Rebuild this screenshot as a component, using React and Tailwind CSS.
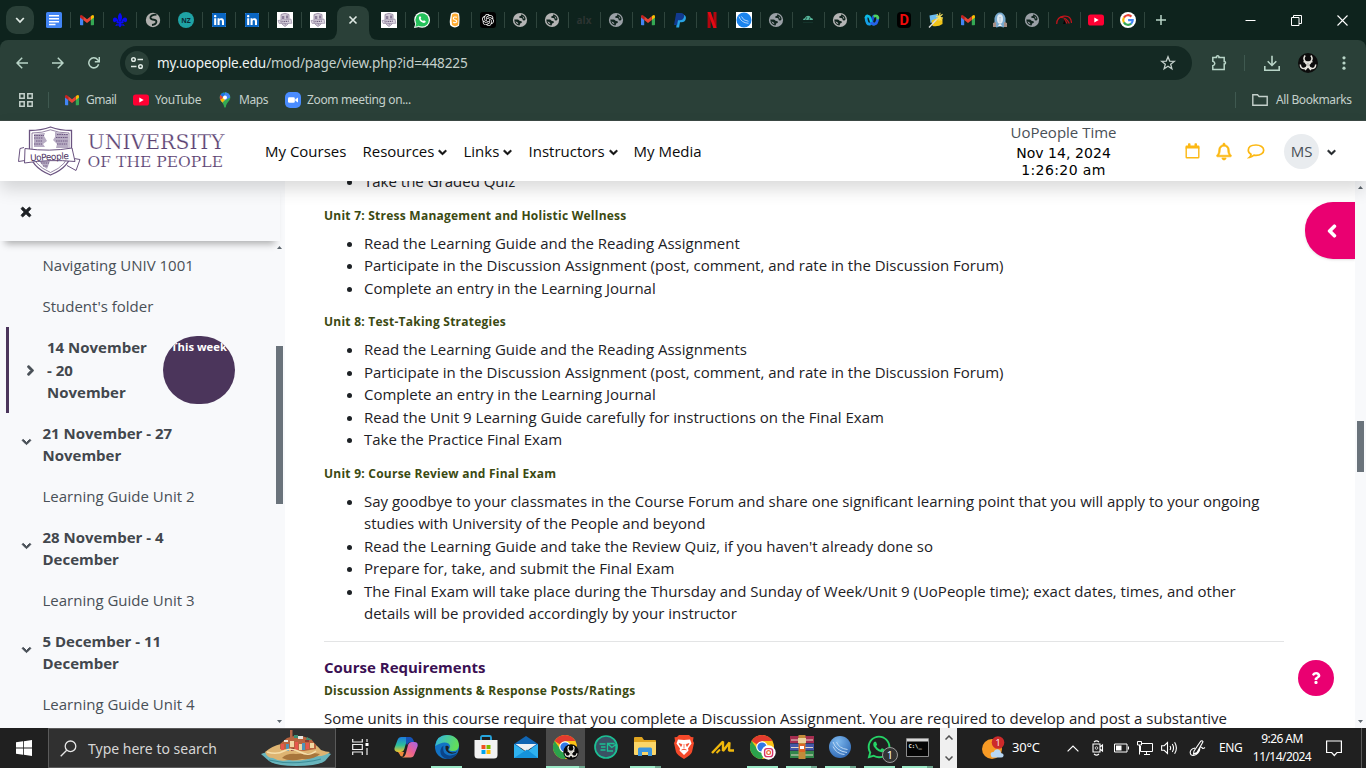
import React from "react";
import { FaWhatsapp, FaLinkedin, FaTimes, FaChevronDown, FaChevronRight, FaChevronLeft, FaRegBell, FaQuestion } from "react-icons/fa";
import { SiOpenai } from "react-icons/si";

const Svg = ({ s = 16, vb = "0 0 16 16", w, h, className = "", children }) => (
  <svg width={w || s} height={h || s} viewBox={vb} fill="none" className={"shrink-0 block " + className}>{children}</svg>
);

/* ---------- favicons ---------- */
const Docs = () => (
  <Svg><rect width="16" height="16" rx="1.5" fill="#4285f4" /><path d="M3 3.7h10M3 6.7h10M3 9.7h10M3 12.5h6.5" stroke="#fff" strokeWidth="1.5" /></Svg>
);
const Gmail = () => (
  <Svg>
    <path d="M1 4v8.5q0 .8.8.8H4.2V7z" fill="#4285f4" />
    <path d="M15 4v8.5q0 .8-.8.8h-2.4V7z" fill="#34a853" />
    <path d="M11.8 4.3 13 3.2q2-1 2 1.2v1L11.8 8z" fill="#fbbc04" />
    <path d="M4.2 8V4.3L8 7.2l3.8-2.9V8L8 10.9z" fill="#ea4335" />
    <path d="M1 5.4v-1Q1 2.2 3 3.2L4.2 4.3V8z" fill="#c5221f" />
  </Svg>
);
const Fleur = () => (
  <Svg><g fill="#0a0af5"><path d="M8 .8C10.600 3.500 10.400 5.500 9.200 9.500H6.800C5.600 5.500 5.400 3.500 8 .8z" /><path d="M6.400 9.600C5.800 4.800.6 4.300.9 8.300c.3 2.400 2.600 2.400 3.100.9.600.1.900.3 1.200 1zM9.600 9.600C10.200 4.800 15.400 4.300 15.100 8.300c-.3 2.400-2.600 2.400-3.100.9-.6.1-.9.3-1.200 1z" /><path d="M4.500 9.400h7v1.700h-7zM6.600 11h2.800l.5 2.300L8 15.600 6.100 13.300zM5.800 11.200l-.3 2.800-2.500-.5zM10.200 11.200l.3 2.800 2.500-.5z" /></g></Svg>
);
const Globe = ({ c = "#b4b4b4" }) => (
  <Svg>
    <circle cx="8" cy="8" r="7.100" fill={c} />
    <path d="M9.300 2.300Q9.600 4 8 4.200 7 4.200 7.100 5.200 7.200 6 9 6q1.500.1 1.500 1.300 0 1.200 1.400 1.200 1.300 0 1.700-1.500Q13 3.500 9.300 2.300z" fill="#10241e" />
    <path d="M2.300 7.500Q2.500 12.500 7 13.600q1-.2.900-1.300 0-1 1-1.100 1.100-.1 1-1.200-.1-.9-1.600-.9Q7.300 9.100 7 8.300 6.800 7.500 5.500 7.500z" fill="#10241e" />
    <path d="M3.400 9.200l2.300 1.200.8 1.900Q4 11.500 3.400 9.200zM10.600 3.900l1.800 2-.5 1.100-1-1.800z" fill={c} />
  </Svg>
);
const Swirl = () => (
  <Svg><circle cx="8" cy="8" r="7.200" fill="#b0b0ae" /><path d="M11.500 2.500Q5 3 5.500 6q.6 1.800 3.500 1.800 3 .3 2.200 2.700-.8 2.200-4.200 2.500" stroke="#10241e" strokeWidth="2" /></Svg>
);
const NZ = () => (
  <Svg><circle cx="8" cy="8" r="8" fill="#1fa3a5" /><text x="8" y="10.600" fontSize="6.800" fontWeight="700" fontFamily="Open Sans, sans-serif" textAnchor="middle" fill="#0c2a35">NZ</text></Svg>
);
const Linked = () => (
  <span className="flex h-4 w-4 items-center justify-center"><span className="flex h-[14px] w-[14px] items-center justify-center bg-white"><FaLinkedin className="block h-[16px] w-[16px] shrink-0 text-[#0a66c2]" /></span></span>
);
const Crest = () => (
  <Svg><rect width="16" height="16" fill="#fff" /><path d="M4 2.500l4-1.200 4 1.200v6q0 4-4 6-4-2-4-6z" fill="#d3ccd8" stroke="#93879f" strokeWidth=".8" /><path d="M5 4h2.300v3H5zM9 3.500h2v3H9zM6.500 11h3l-1 2z" fill="#8c7f9b" /><path d="M1 8.500l13-1.400.8 4.200L2.200 11.500z" fill="#ddd7e1" stroke="#9a8ea7" strokeWidth=".7" /><path d="M3.500 9.900l8.500-.8" stroke="#6d5c7f" strokeWidth="1.200" strokeDasharray="1.200 .6" /></Svg>
);
const Wa = () => (
  <Svg><circle cx="8.100" cy="7.900" r="7.900" fill="#fff" /><path d="M0 16l1.400-4.500L5 15z" fill="#fff" /><circle cx="8.100" cy="7.900" r="6.700" fill="#25c15b" /><path d="M1.300 14.700l1.100-3.600L5 14z" fill="#25c15b" /><path d="M5.300 4.500q1-.8 1.500.3l.4 1-.6 1q.9 1.600 2.500 2.300l.8-.9 1.500.7q.8.500-.2 1.500-1.500 1.200-4.200-.6Q3.900 7 5.300 4.500z" fill="#fff" /></Svg>
);
const Scribble = () => (
  <Svg><path d="M4 1.500Q8-1 12 1.500q1 6 0 12.300-4 3-8 .3-1.600-1.500-1.100-6.200z" fill="#fff" /><path d="M5 2.500q3-2 6.200 0 .7 5.500 0 10.500-3 2.300-6.200 0-1-5 0-10.500z" fill="#ffad33" /><path d="M10 5.300Q6.300 4.300 6.300 6.500q.2 1.200 2 1.500 1.500.5 1.500 1.700-.5 1.500-3.600.7" stroke="#fff" strokeWidth="1.100" /></Svg>
);
const Gpt = () => (
  <span className="flex h-4 w-4 items-center justify-center rounded-[3px] bg-black"><SiOpenai className="block h-3 w-3 text-white" /></span>
);
const Alx = () => <span className="flex h-4 w-4 items-center justify-center font-['Open_Sans',sans-serif] text-[10px] font-bold text-[#2c3432]">alx</span>;
const Netflix = () => (
  <Svg><path d="M3.600 0h3v16h-3zM9.500 0h3v16h-3z" fill="#b1060f" /><path d="M3.600 0h3.100l5.800 16H9.400z" fill="#e50914" /></Svg>
);
const Pay = () => (
  <Svg><path d="M6 2.800h5.500q3 .9 2.300 4.200-.9 3.300-4.300 3.300H8L7.100 15.500H4.200z" fill="#28a3e3" /><path d="M4.200 1h5.300q3.300.8 2.600 3.800-.8 3.600-4.600 3.500H6L5.100 13H2z" fill="#123a8f" /></Svg>
);
const Blue = () => (
  <Svg><rect width="16" height="16" fill="#fff" /><circle cx="8" cy="8" r="7.500" fill="#1a84ee" /><path d="M3 4.500Q5 10.800 12.500 11.300M5.500 4.500Q7 8.700 12.500 9.300" stroke="#d5e9ff" strokeWidth=".8" /></Svg>
);
const BlueApp = () => (
  <Svg s={24} vb="0 0 24 24">
    <defs><radialGradient id="ba" cx=".4" cy=".25" r=".9"><stop stopColor="#7db8ee" /><stop offset="1" stopColor="#255fae" /></radialGradient></defs>
    <circle cx="12" cy="12" r="11" fill="url(#ba)" />
    <path d="M5 7Q8 16 19 17.500M8.500 7Q11 13.500 19.500 14.500M5 11.500Q8.500 19 16.500 19.500" stroke="#bcd8f5" strokeWidth="1" />
  </Svg>
);
const Cloud = () => (
  <Svg><path d="M3 8q.2-1.800 1.800-1.700Q5.500 3.800 8 3.800q2.300 0 3 2.200Q13 6 13 8z" fill="#57b79b" /><path d="M5.500 8l1.500-3M9 8l1-2.600" stroke="#16352d" strokeWidth=".7" /><path d="M3 10.500h10" stroke="#15332b" /></Svg>
);
const Webex = () => (
  <Svg>
    <path d="M10.700 4Q9 4 8.300 7.700 7.500 12 5.500 12.100" stroke="#1b4fd0" strokeWidth="2.800" />
    <path d="M2 5.600Q2.500 12.200 5.500 12.200" stroke="#14a0e8" strokeWidth="2.800" strokeLinecap="round" />
    <path d="M2 5.400Q2.500 3.600 4 4 5.800 4.200 6.600 7.800 7.500 12 9.900 12.100" stroke="#0cbbe6" strokeWidth="2.600" strokeLinecap="round" />
    <path d="M7.200 10q.9 2.200 2.700 2.200 3.400-.2 3.900-6.600" stroke="#2662ea" strokeWidth="2.800" />
    <path d="M10.700 4Q13.600 3.200 13.900 6" stroke="#4fd35d" strokeWidth="2.800" strokeLinecap="round" />
  </Svg>
);
const DIcon = () => (
  <Svg><rect x="1" y="0" width="14" height="16" rx="4" fill="#000" /><text x="8.200" y="13.200" fontSize="14.500" fontWeight="700" fontFamily="Roboto, sans-serif" textAnchor="middle" fill="#f00b0b">D</text></Svg>
);
const Wand = () => (
  <Svg><path d="M1.500 3.500l8-1.500 1 6-8 3z" fill="#6bbcf0" /><path d="M3.500 8.500q5-3 11-2.500v6q-4 3-10 2z" fill="#f0c419" /><path d="M1 15.500L9.500 6.500" stroke="#ddd" strokeWidth="1.400" /><path d="M8 4.500L15 6M12 .8l-1 8M9 2l4.500 6.500M14.500 2.200L8.500 8" stroke="#f6e05e" strokeWidth="1.100" /></Svg>
);
const Ghost = () => (
  <Svg><path d="M2.500 14V6Q4 .5 8 .5T13.500 6v8l-2 1.500-3.500-1-3.500 1z" fill="#78a9ce" /><ellipse cx="8" cy="7" rx="3" ry="4.800" fill="#dde7ef" /><path d="M1 11l3-1v5H1zM12 10l3 1v4h-3z" fill="#a78f86" /><path d="M6 14q2-4 4 0z" fill="#f2efee" /><path d="M7 5.500h2M8 6v4" stroke="#b5c5d5" strokeWidth=".9" /></Svg>
);
const Gauge = () => (
  <Svg><path d="M.7 12Q.8 5 8 4.200T15.500 11M5 5.500q5.500 0 8.300 6M8 7.500q2 1 3 4" stroke="#c3141b" strokeWidth="1.200" /><path d="M7 12l1.500-4.500 1 4.500z" fill="#050505" /></Svg>
);
const YT = () => (
  <Svg><rect y="2.400" width="16" height="11.200" rx="2.600" fill="#ff0033" /><path d="M6.300 5.500v5L10.700 8z" fill="#fff" /></Svg>
);
const Google = () => (
  <Svg><circle cx="8" cy="8" r="8" fill="#fff" /><g strokeWidth="2.200"><path d="M11.400 4.600A4.800 4.800 0 0 0 3.900 5.600" stroke="#ea4335" /><path d="M3.900 5.600a4.800 4.800 0 0 0 0 4.900" stroke="#fbbc05" /><path d="M3.900 10.400a4.800 4.800 0 0 0 7.300 1.200" stroke="#34a853" /><path d="M11.100 11.700Q12.800 10.100 12.700 8.100H8.100" stroke="#4285f4" /></g></Svg>
);
const Maps = () => (
  <Svg><clipPath id="pin"><path d="M8 .2a5.400 5.400 0 0 1 5.300 5.400C13.300 9 9.500 10.500 8.800 15q-.8 1.600-1.600 0C6.500 10.500 2.700 9 2.700 5.600A5.400 5.400 0 0 1 8 .2z" /></clipPath><g clipPath="url(#pin)"><path d="M0 0h16v16H0z" fill="#34a853" /><path d="M8 0h8v4L7 9 3 11 1 8 8 2z" fill="#4285f4" /><path d="M0 9l7-5 1 4-4 4z" fill="#fbbc04" /><path d="M1 0h5.500L8 2 4.500 7 1 4z" fill="#1a73e8" /><path d="M2 2l4 3-3.500 4z" fill="#ea4335" /></g><circle cx="8" cy="5.600" r="2" fill="#fff" /></Svg>
);
const Zoom = () => (
  <Svg><rect width="16" height="16" rx="5" fill="#4a8cff" /><rect x="3" y="5.200" width="6.800" height="5.600" rx="1.300" fill="#fff" /><path d="M10.300 7.200l2.700-1.700v5l-2.700-1.700z" fill="#fff" /></Svg>
);
const BioMark = () => (
  <g stroke="#e8e6df" strokeWidth="1.500">
    <path d="M7.200 2.500Q4.800 5.500 7 8q3 2 6 0 2.200-2.500-.2-5.500" />
    <path d="M2.300 11.500Q2.500 15.500 6 15.600 9.300 15 9.200 11.600 8.500 9 5.500 8.500" />
    <path d="M17.700 11.500Q17.500 15.500 14 15.600 10.700 15 10.800 11.600 11.500 9 14.500 8.500" />
    <path d="M7 17l3-3.500 3 3.500M7.500 11q2.500-2.500 5 0" />
  </g>
);
const Bio = () => (
  <Svg s={20} vb="0 0 20 20"><circle cx="10" cy="10" r="10" fill="#0c0c0c" /><BioMark /></Svg>
);

const leftTabs = [<Docs />, <Gmail />, <Fleur />, <Swirl />, <NZ />, <Linked />, <Linked />, <Crest />, <Crest />];
const midTabs = [<Crest />, <Wa />, <Scribble />];
const rightTabs = [<Gpt />, <Globe />, <Globe />, <Alx />, <Globe c="#9aa0a6" />, <Gmail />, <Pay />, <Netflix />, <Blue />, <Globe c="#9aa0a6" />, <Cloud />, <Globe />, <Webex />, <DIcon />, <Wand />, <Gmail />, <Ghost />, <Globe c="#9aa0a6" />, <Gauge />, <YT />, <Google />];

const Sep = ({ className = "bg-[#2f453d]" }) => <span className={"h-4 w-px shrink-0 " + className} />;

function TabStrip() {
  return (
    <div className="flex h-10 shrink-0 bg-[#0e231d]">
      <div className="flex w-[46px] shrink-0 items-center pl-[6px]">
        <div className="flex h-7 w-7 items-center justify-center rounded-[10px] bg-[#2a4038]">
          <Svg s={10} vb="0 0 10 10"><path d="M1.200 3l3.800 4 3.800-4" stroke="#dfe9e4" strokeWidth="1.800" /></Svg>
        </div>
      </div>
      <div className="flex w-[281px] shrink-0 items-center overflow-hidden">
        {leftTabs.map((t, i) => (
          <div key={i} className="flex w-[33px] shrink-0 items-center gap-2">{t}{i < 8 && <Sep />}</div>
        ))}
      </div>
      <svg width="54" height="40" viewBox="0 0 54 40" className="block shrink-0"><path d="M0 40Q10 40 10 30V16Q10 6 20 6H32Q42 6 42 16V30Q42 40 52 40z" fill="#2a4038" /><path d="M22.500 16.500l7 7M29.500 16.500l-7 7" stroke="#dfe9e4" strokeWidth="1.600" /></svg>
      <div className="flex shrink-0 items-center">
        {midTabs.map((t, i) => (
          <div key={i} className="flex w-[33px] shrink-0 items-center gap-2">{t}<Sep /></div>
        ))}
        {rightTabs.map((t, i) => (
          <div key={i} className="flex w-8 shrink-0 items-center gap-2">{t}<Sep /></div>
        ))}
      </div>
      <div className="flex flex-1 items-center pl-[4px]">
        <Svg s={10} vb="0 0 10 10"><path d="M5 0v10M0 5h10" stroke="#b9d5c8" strokeWidth="1.500" /></Svg>
        <div className="ml-auto flex items-center gap-[35px] pr-[18px]">
          <Svg s={11} vb="0 0 11 11"><path d="M.5 5.500h10" stroke="#fff" /></Svg>
          <Svg s={11} vb="0 0 11 11"><path d="M.5 2.500h7.500v8H.5zM2.500 2.500V.5h8v8H8" stroke="#fff" /></Svg>
          <Svg s={11} vb="0 0 11 11"><path d="M.5.5l10 10M10.500.5l-10 10" stroke="#fff" strokeWidth="1.100" /></Svg>
        </div>
      </div>
    </div>
  );
}

function Toolbar() {
  return (
    <div className="shrink-0 bg-[#0e231d]">
      <div className="flex h-[46px] items-center rounded-t-lg bg-[#2a4038]">
        <div className="flex w-[120px] items-center gap-[24px] pl-[16px]">
          <Svg s={12} vb="0 0 12 12"><path d="M12 6H1M6.200.7L1 6l5.200 5.300" stroke="#b9d5c8" strokeWidth="1.500" /></Svg>
          <Svg s={12} vb="0 0 12 12"><path d="M0 6h11M5.800.7L11 6l-5.200 5.300" stroke="#b9d5c8" strokeWidth="1.500" /></Svg>
          <Svg s={12} vb="0 0 12 12"><path d="M10.600 7.300A5 5 0 1 1 9.700 2.700L11 4.200" stroke="#b9d5c8" strokeWidth="1.500" /><path d="M11.300 0v4.700H6.800" stroke="#b9d5c8" strokeWidth="1.500" /></Svg>
        </div>
        <div className="flex h-[34px] w-[1072px] items-center rounded-full bg-[#142923] pl-[5px]">
          <div className="flex h-6 w-6 items-center justify-center rounded-full bg-[#2a4038]">
            <Svg s={14} vb="0 0 14 14"><g stroke="#dfe9e4" strokeWidth="1.500"><circle cx="3.500" cy="3.500" r="1.800" /><path d="M7.500 3.500H13M1 10.500h5.500" /><circle cx="10.500" cy="10.500" r="1.800" /></g></Svg>
          </div>
          <div className="ml-2 whitespace-nowrap font-['Noto_Sans',sans-serif] text-[13.6px] tracking-[-0.14px] text-[#c4d0cb]"><span className="text-[#eef3f1]">my.uopeople.edu</span>/mod/page/view.php?id=448225</div>
          <Svg s={16} className="ml-auto mr-[16px]"><path d="M8 1.800l1.700 4.300 4.600.3-3.600 2.900 1.200 4.500L8 11.300l-3.900 2.500 1.200-4.500L1.700 6.400l4.600-.3z" stroke="#c4d0cb" strokeWidth="1.300" /></Svg>
        </div>
        <Svg s={18} vb="0 0 18 18" className="ml-[18px]"><path d="M2.800 3.500H6.500V2.400q1.200-1.400 2.400 0v1.100h5.300v4h.6q1.400 1.200 0 2.400h-.6v5.600H2.800v-3.800q2-.5 2-2.200T2.800 7.200z" stroke="#b9d5c8" strokeWidth="1.500" /></Svg>
        <Sep className="ml-[16px] bg-[#3f5950]" />
        <Svg s={16} className="ml-[19px]"><path d="M8 .8v9.500M3.700 6.300L8 10.500l4.300-4.200M.8 11v4.200h14.400V11" stroke="#b9d5c8" strokeWidth="1.600" /></Svg>
        <span className="ml-[18px]"><Bio /></span>
        <Svg w={4} h={14} vb="0 0 4 14" className="ml-[24px]"><g fill="#b9d5c8"><circle cx="2" cy="1.800" r="1.600" /><circle cx="2" cy="7" r="1.600" /><circle cx="2" cy="12.200" r="1.600" /></g></Svg>
      </div>
      <div className="flex h-[35px] items-center border-b border-[#3c4a45] bg-[#2a4038] pb-[6px] pl-[19px] font-['Noto_Sans',sans-serif] text-[12px] text-[#c4d0cb]">
        <Svg s={14} vb="0 0 14 14"><path d="M.8.8h4.400v4.400H.8zM8.800.8h4.400v4.400H8.800zM.8 8.800h4.400v4.400H.8zM8.800 8.800h4.400v4.400H8.800z" stroke="#c4d0cb" strokeWidth="1.500" /></Svg>
        <Sep className="ml-[15px] bg-[#3f5950]" />
        <span className="ml-[15px]"><Gmail /></span><span className="ml-[6px] w-[32px] whitespace-nowrap tracking-[-0.5px]">Gmail</span>
        <span className="ml-[15px]"><YT /></span><span className="ml-[6px] w-[47px] whitespace-nowrap tracking-[-0.35px]">YouTube</span>
        <span className="ml-[15px]"><Maps /></span><span className="ml-[6px] w-[30px] whitespace-nowrap tracking-[-0.45px]">Maps</span>
        <span className="ml-[16px]"><Zoom /></span><span className="ml-[6px] whitespace-nowrap tracking-[-0.35px]">Zoom meeting on...</span>
        <Sep className="ml-auto bg-[#3f5950]" />
        <Svg s={16} className="ml-[16px]"><path d="M.8 2.800h4.700l1.600 1.700h8.100v8.700H.8z" stroke="#c4d0cb" strokeWidth="1.400" /></Svg>
        <span className="ml-[8px] mr-[14px] w-[76px] whitespace-nowrap tracking-[-0.4px]">All Bookmarks</span>
      </div>
    </div>
  );
}

function Logo() {
  return (
    <svg width="210" height="54" viewBox="16 124 210 54" className="block shrink-0">
      <g stroke="#6a5380" fill="#fff">
        <path d="M29.500 130.500q12 0 21-3.500 9 3.500 21 3.500V151q-1 16-21 24-20-8-21-24z" strokeWidth="1.300" />
        <path d="M32 133q10.500 0 18.500-3.200Q58.500 133 69 133v18q-1 14-18.500 21.500Q33 165 32 151z" strokeWidth=".7" />
      </g>
      <path d="M34 134l11-1-1 3 3 5-4 3 2 3H34zM55 132l13 2v14H56l1-4-4-4 2-3zM39 161h11l-3 8-4-3z" fill="#b7acc3" />
      <path d="M34 135.500h10M34 138h9M36 141h6M34 144h8M57 134.500h11M56 137.500h12M56 141h12M57 144h10M41 163h8M43 166h5" stroke="#5b4272" strokeWidth=".8" strokeDasharray="1.500 .8" />
      <path d="M24 147.500l-4 1-1.500 13 6.500-1M74 158.500l6 1-4 11-9-5" fill="#fff" stroke="#6a5380" />
      <path d="M25 148.500Q50 152 72 148l3 13.500q-25-2.500-50.500 1.500z" fill="#fff" stroke="#6a5380" />
      <text x="49.500" y="160" fontFamily="DejaVu Sans, sans-serif" fontSize="9" textAnchor="middle" fill="#4d3564" textLength="39" transform="rotate(-3 49 158)">UoPeople</text>
      <text x="87.500" y="149.300" fontFamily="DejaVu Serif, serif" fontSize="20.400" fill="#5b4272" stroke="#fff" strokeWidth=".25" textLength="137" lengthAdjust="spacingAndGlyphs">UNIVERSITY</text>
      <text x="87.500" y="167.400" fontFamily="DejaVu Serif, serif" fontSize="15.700" fill="#5b4272" stroke="#fff" strokeWidth=".15" textLength="135.500" lengthAdjust="spacingAndGlyphs">OF THE PEOPLE</text>
    </svg>
  );
}

/* Heavier chevrons for the page navigation. */
const thick = "stroke-current [stroke-width:50]";

const NavItem = ({ children, menu, className = "" }) => (
  <span className={"flex shrink-0 items-center gap-[4px] whitespace-nowrap " + className}>{children}{menu && <FaChevronDown className={"mt-[2px] block h-[9px] w-[9px] overflow-visible " + thick} />}</span>
);

function SiteHeader() {
  return (
    <header className="relative z-20 flex h-[60px] shrink-0 items-center bg-white pl-[16px] font-['Open_Sans',sans-serif] text-[15px] text-[#0b0b0b] shadow-[0_8px_16px_rgba(0,0,0,0.15)]">
      <Logo />
      <nav className="ml-[39px] flex">
        <NavItem className="w-[97.5px]">My Courses</NavItem>
        <NavItem menu className="w-[101px]">Resources</NavItem>
        <NavItem menu className="w-[65px]">Links</NavItem>
        <NavItem menu className="w-[105px]">Instructors</NavItem>
        <NavItem>My Media</NavItem>
      </nav>
      <div className="ml-auto mr-[68px] flex w-[107px] flex-col items-center whitespace-nowrap leading-[17px] text-black">
        <span className="mb-[4px] text-[15px] text-[#495057]">UoPeople Time</span>
        <span className="font-['DejaVu_Sans',sans-serif] text-[14px] tracking-[0.05px]">Nov 14, 2024</span>
        <span className="font-['DejaVu_Sans',sans-serif] text-[14px] tracking-[0.4px]">1:26:20 am</span>
      </div>
      <div className="flex w-[181px] items-center text-[#fcb813]">
        <Svg w={15} h={16} vb="0 0 15 16"><path d="M1.200 4.500v9.700q0 .6.6.6h11.400q.6 0 .6-.6V4.500" stroke="#fcb813" strokeWidth="1.400" /><path d="M.5 3.500q0-1 1-1H3V1q0-.8.8-.8h.9q.8 0 .8.800v1.500h4V1q0-.8.8-.8h.9q.8 0 .8.800v1.500h1.500q1 0 1 1v2H.5z" fill="#fcb813" /></Svg>
        <FaRegBell className="ml-[16px] block h-[17px] w-[16px] overflow-visible stroke-current [stroke-width:18]" />
        <Svg w={18} h={16} vb="0 0 18 16" className="ml-[15px]"><path d="M9 2c4.500 0 7.700 2.300 7.700 5.200S13.500 12.400 9 12.400q-1 0-2-.2Q5 14 2.500 14.300 4.200 12.800 4 11.200 1.300 9.700 1.300 7.200 1.300 2 9 2z" stroke="#fcb813" strokeWidth="1.700" /></Svg>
        <span className="ml-[19px] flex h-[35px] w-[35px] items-center justify-center rounded-full bg-[#e9ecef] text-[15px] text-[#495057]">MS</span>
        <FaChevronDown className={"ml-[8px] mt-[2px] block h-[9px] w-[9px] overflow-visible text-[#1d2125] " + thick} />
      </div>
    </header>
  );
}

const SideLink = ({ children }) => <div className="flex h-[41px] shrink-0 items-center pl-[42.5px] text-[#495057]">{children}</div>;
const SideWeek = ({ a, b }) => (
  <div className="flex h-[63px] shrink-0 items-center pb-[2px] font-bold">
    <span className="flex w-[42.5px] shrink-0 justify-center pb-[3px] pl-[11px]"><FaChevronDown className={"block h-[10px] w-[11px] overflow-visible text-[#495057] " + thick} /></span>
    <span className="leading-[22px] text-[#42474d]">{a}<br />{b}</span>
  </div>
);

const Tri = ({ up }) => <Svg w={5} h={3} vb="0 0 5 3">{up ? <path d="M0 3L2.500 0 5 3z" fill="#5d666e" /> : <path d="M0 0l2.500 3L5 0z" fill="#5d666e" />}</Svg>;

function Sidebar() {
  return (
    <aside className="flex w-[285px] shrink-0 flex-col bg-[#f8f9fb] font-['Open_Sans',sans-serif] text-[15px]">
      <div className="relative z-10 mr-[5px] flex h-[60px] shrink-0 items-center bg-[#f8f9fb] pl-[20px] pt-[2px] shadow-[0_8px_7px_-5px_rgba(0,0,0,0.3)]">
        <FaTimes className="block h-[14px] w-[12px] overflow-visible stroke-current text-[#1d2125] [stroke-width:30]" />
      </div>
      <div className="flex min-h-0 flex-1">
        <div className="flex w-[275px] flex-col overflow-hidden pt-[4px]">
          <SideLink>Navigating UNIV 1001</SideLink>
          <SideLink>Student's folder</SideLink>
          <div className="ml-[6px] flex h-[86px] shrink-0 items-center border-l-[3px] border-[#4b355b] font-bold">
            <FaChevronRight className={"ml-[17px] block h-[11px] w-[9px] shrink-0 overflow-visible text-[#495057] " + thick} />
            <span className="ml-[12px] w-[116px] leading-[22.5px] text-[#42474d]">14 November<br />- 20<br />November</span>
            <span className="flex h-[68px] w-[72px] shrink-0 justify-center overflow-hidden whitespace-nowrap rounded-[34px] bg-[#4b355b] pt-[4px] text-[11.25px] leading-[14px] text-white">This week</span>
          </div>
          <SideWeek a="21 November - 27" b="November" />
          <SideLink>Learning Guide Unit 2</SideLink>
          <SideWeek a="28 November - 4" b="December" />
          <SideLink>Learning Guide Unit 3</SideLink>
          <SideWeek a="5 December - 11" b="December" />
          <SideLink>Learning Guide Unit 4</SideLink>
        </div>
        <div className="flex w-[10px] flex-col items-center pb-[5px] pr-[2px] pt-[5px]">
          <Tri up />
          <div className="ml-[1px] mt-[97px] h-[158px] w-[7px] bg-[#6a737b]" />
          <span className="mt-auto"><Tri /></span>
        </div>
      </div>
    </aside>
  );
}

const H = ({ children }) => <h5 className="mb-[8px] mt-[15px] h-[16px] whitespace-nowrap text-[12px] font-bold leading-[16px] tracking-[0.24px] text-[#3b4a12]">{children}</h5>;
const UL = ({ items }) => <ul className="list-disc pl-[40px]">{items.map((x) => <li key={x}>{x}</li>)}</ul>;

function Main() {
  return (
    <main className="relative min-w-0 flex-1 overflow-hidden bg-white pl-[39px] pr-[71px] font-['Open_Sans',sans-serif] text-[15px] leading-[22.5px] text-[#1d2125]">
      <div className="-mt-[11px]"><UL items={["Take the Graded Quiz"]} /></div>
      <H>Unit 7: Stress Management and Holistic Wellness</H>
      <UL items={["Read the Learning Guide and the Reading Assignment", "Participate in the Discussion Assignment (post, comment, and rate in the Discussion Forum)", "Complete an entry in the Learning Journal"]} />
      <H>Unit 8: Test-Taking Strategies</H>
      <UL items={["Read the Learning Guide and the Reading Assignments", "Participate in the Discussion Assignment (post, comment, and rate in the Discussion Forum)", "Complete an entry in the Learning Journal", "Read the Unit 9 Learning Guide carefully for instructions on the Final Exam", "Take the Practice Final Exam"]} />
      <H>Unit 9: Course Review and Final Exam</H>
      <UL items={["Say goodbye to your classmates in the Course Forum and share one significant learning point that you will apply to your ongoing studies with University of the People and beyond", "Read the Learning Guide and take the Review Quiz, if you haven't already done so", "Prepare for, take, and submit the Final Exam", "The Final Exam will take place during the Thursday and Sunday of Week/Unit 9 (UoPeople time); exact dates, times, and other details will be provided accordingly by your instructor"]} />
      <hr className="mt-[16px] border-[#e3e4e5]" />
      <h4 className="mt-[15px] h-[20px] text-[15px] font-bold leading-[20px] text-[#3b1053]">Course Requirements</h4>
      <h5 className="mt-[6px] h-[16px] text-[12px] font-bold leading-[16px] tracking-[0.24px] text-[#3b4a12]">Discussion Assignments &amp; Response Posts/Ratings</h5>
      <p className="mt-[8px] whitespace-nowrap">Some units in this course require that you complete a Discussion Assignment. You are required to develop and post a substantive</p>
      <div className="absolute right-0 top-[21px] flex h-[57px] w-[50px] items-center justify-center rounded-l-[28px] bg-[#ea0071] pl-[4px] shadow-sm"><FaChevronLeft className={"block h-[14px] w-[12px] overflow-visible text-white " + thick} /></div>
      <div className="absolute right-[21px] top-[479px] flex h-9 w-9 items-center justify-center rounded-full bg-[#ea0071]"><FaQuestion className="block h-[12px] w-[10px] text-white" /></div>
    </main>
  );
}

/* ---------- taskbar icons ---------- */
const Island = () => (
  <Svg w={72} h={36} vb="0 0 72 36">
    <path d="M1 24q10-4 35-4t35 4l-6 7q-7 5-29 5-20 0-27-5z" fill="#69b5bd" />
    <path d="M5 22q7-6 16-8 4-5 12-6l14 1q9 5 14 11 5 2 9 2-5 5-16 4-10 6-25 4-10 2-16-2-6 0-8-6z" fill="#deb472" />
    <path d="M22 28q5-5 14-4l14-1q6 0 10 1-6 6-18 5-12 3-20-1z" fill="#a8763c" />
    <path d="M20 14l7-6 7-2 8 0 9 3 5 6v4l-12 2-12-1-12-1z" fill="#b9643f" />
    <path d="M30 0h2.500v8H30z" fill="#b56548" />
    <path d="M21 14h3v6h-3zM35 12h3v8h-3zM46 13h3v6h-3z" fill="#e8574d" /><path d="M26 14h3v7h-3zM42 13h3v7h-3z" fill="#4e93b9" /><path d="M30 11h4v6h-4zM39 14h3v6h-3zM50 13h4v5h-4z" fill="#f1d7a3" /><path d="M38 6h5v3h-5zM24 10h4v2h-4z" fill="#e9e6de" /><path d="M34 5h4v3h-4zM47 7l5 3h-6z" fill="#3f8d74" /><path d="M31 18h3v3h-3zM45 10h4v2h-4z" fill="#8a3b32" />
    <path d="M7 22q10 3 17-1t16 1 16-1" stroke="#f6dfab" strokeWidth="1.500" />
    <path d="M9 30q25 6 52-1" stroke="#3c8e99" strokeWidth="1.200" />
  </Svg>
);
const Copilot = () => (
  <Svg s={24} vb="0 0 24 24">
    <defs><linearGradient id="ca" x1="0" y1="0" x2="0" y2="1"><stop stopColor="#1c7be0" /><stop offset=".55" stopColor="#2cbf9a" /><stop offset="1" stopColor="#f0c52b" /></linearGradient><linearGradient id="cb" x1="1" y1="0" x2="0" y2="1"><stop stopColor="#a266ea" /><stop offset=".5" stopColor="#ea5f93" /><stop offset="1" stopColor="#fa9a4e" /></linearGradient></defs>
    <path d="M7.500 2H17q-3.500.5-4.500 4.500l-2 7q-1 3.500-4 3.500H4q-4.500-.3-3.300-4.500L3.500 5q1-3 4-3z" fill="url(#ca)" /><path d="M16.500 22.500H8q3-.5 4-4.500l2-8q1-3 4-3h2.500q4 .3 3 4.500L20.500 19q-1 3.500-4 3.500z" fill="url(#cb)" /><path d="M12 2h4q3 .5 4 5h-3q-3 0-4 3.500L12 8z" fill="#1653b8" /><path d="M4 17h6l-1.500 4.500q-2 .5-2.800-2z" fill="#f08a3c" />
  </Svg>
);
const Edge = () => (
  <Svg s={24} vb="0 0 24 24">
    <defs><linearGradient id="ea" x1="0" y1="0" x2="1" y2=".3"><stop stopColor="#2fb3e5" /><stop offset="1" stopColor="#62de5a" /></linearGradient></defs>
    <circle cx="12" cy="12" r="12" fill="#1272c4" />
    <path d="M.3 11Q1.500 0 12 0q11.500.5 12 10.500-.5 6-7 5.500-4-.2-2.500-2.500 1.700-2.500-1-5-5-3-13.200 2.500z" fill="url(#ea)" />
    <path d="M8.500 10.500q-1.500 8 4.500 9.700 5 1 9.500-2.200Q18 24.500 12 24 4.500 22 5.500 15q.7-3.500 3-4.500z" fill="#0a4489" />
    <path d="M10.500 11q2.500-.8 3.300 1 .2 1-.6 2.300-.4 2.500 4.300 3.200 3 0 4.900-1.200-1.500 2.200-5.500 2.400Q9.500 18 10.500 11z" fill="#202020" />
  </Svg>
);
const Store = () => (
  <Svg s={24} vb="0 0 24 24"><path d="M7 6V2.500Q7 1 8.500 1h7Q17 1 17 2.500V6" stroke="#27a6df" strokeWidth="1.800" /><path d="M.5 5h23v15q0 3.500-3.500 3.500H4Q.5 23.500.5 20z" fill="#f3f3f3" /><path d="M7.500 10H11.500v4h-4z" fill="#f25022" /><path d="M12.500 10h4v4h-4z" fill="#7fba00" /><path d="M7.500 15h4v4h-4z" fill="#00a4ef" /><path d="M12.500 15h4v4h-4z" fill="#ffb900" /></Svg>
);
const Mail = () => (
  <Svg s={24} vb="0 0 24 24"><path d="M0 9L12 1l12 8v4H0z" fill="#1065b3" /><path d="M0 9l12 8 12-8v14H0z" fill="#2fb2f0" /><path d="M1.500 9h21L12 16.500z" fill="#eef1f4" /><path d="M0 23L13 14.500 24 23z" fill="#1593dc" /></Svg>
);
const Chrome = ({ children }) => (
  <Svg s={26} vb="0 0 26 26"><circle cx="12" cy="13" r="12" fill="#fbc116" /><path d="M1.600 7A12 12 0 0 1 22.400 7H12L8 11z" fill="#e33b2e" /><path d="M1.600 7A12 12 0 0 0 12 25l4.600-8.500-7.600 1z" fill="#2ba24c" /><circle cx="12" cy="13" r="5.800" fill="#fff" /><circle cx="12" cy="13" r="4.600" fill="#2f78e8" />{children}</Svg>
);
const ChromeBio = () => <Chrome><g transform="translate(10.300 10.300) scale(.77)"><circle cx="10" cy="10" r="10" fill="#080808" /><BioMark /></g></Chrome>;
const ChromeIg = () => <Chrome><circle cx="18.500" cy="18.500" r="7.200" fill="#fff" /><rect x="14.600" y="14.600" width="8" height="8" rx="2.400" stroke="#d6336c" strokeWidth="1.400" /><circle cx="18.600" cy="18.600" r="1.900" stroke="#ef6c33" strokeWidth="1.200" /></Chrome>;
const SendMail = () => (
  <Svg s={24} vb="0 0 24 24"><circle cx="12" cy="12" r="11" fill="#3a5164" stroke="#1cbf93" strokeWidth="1.700" /><path d="M5.500 9h6M7 12h4.500M6.500 15h5M20 9.500V8.500h-6.500v7.500H19M14 9l3.800 3.500L22 9.500v6" stroke="#1cbf93" strokeWidth="1.300" /></Svg>
);
const Folder = () => (
  <Svg w={22} h={20} vb="0 0 22 20"><path d="M0 1q0-1 1-1h7l2 3h11q1 0 1 1v13H0z" fill="#e1a520" /><path d="M0 5h22v12q0 1-1 1H1q-1 0-1-1z" fill="#fbd668" /><path d="M4 19v-7q0-1.500 1.500-1.500h11Q18 10.500 18 12v7h-4v-4H8v4z" fill="#3b96df" /></Svg>
);
const Brave = () => (
  <Svg w={20} h={24} vb="0 0 20 24"><path d="M5 0h10l2 2 2.500.3L19 6l1 2-2 9q-1 3-8 7-7-4-8-7L0 8l1-2-.5-3.700L3 2z" fill="#f5492a" /><path d="M4 4.500l6 .5 6-.5 1.500 4-3.500 5 .5 2L10 20l-4.500-4.500.5-2-3.500-5z" fill="#fff" /><path d="M5 8.500l3 1-1 2zM15 8.500l-3 1 1 2zM10 9v4M7.500 15l2.500-1 2.500 1" fill="#f5492a" stroke="#f5492a" strokeWidth=".7" /></Svg>
);
const Am = () => (
  <Svg w={24} h={14} vb="0 0 24 14"><path d="M1 13L12 1.500v9.500L18.500 2.500 18 10.500h5" stroke="#f0b80c" strokeWidth="2.400" strokeLinejoin="bevel" /><path d="M5.500 13L9 9.500" stroke="#f0b80c" strokeWidth="2" /></Svg>
);
const Rar = () => (
  <Svg s={24} vb="0 0 24 24"><path d="M0 1h24v7H0z" fill="#a62e50" /><path d="M0 8.500h24v7H0z" fill="#4457a8" /><path d="M0 16h24v7H0z" fill="#33864a" /><path d="M1 5h22M1 12.500h22M1 20h22" stroke="#e3d8ca" strokeWidth="1.200" /><path d="M8.500 0h7v24h-7z" fill="#c28b3a" /><path d="M8 3h8v5H8z" fill="#ead09b" /><path d="M9 9h6v8H9z" fill="#de6425" /><path d="M10 11h4v3h-4z" fill="#fff" /></Svg>
);
const Term = () => (
  <Svg w={23} h={19} vb="0 0 23 19"><path d="M.5.5h22v18H.5z" fill="#050505" stroke="#8d8d8d" /><path d="M1 1h21v2.500H1z" fill="#d8d8d8" /><text x="2.500" y="9.500" fontSize="5.500" fontWeight="700" fontFamily="DejaVu Sans Mono, monospace" fill="#eee">C:\_</text></Svg>
);
const Weather = () => (
  <Svg w={26} h={24} vb="0 0 26 24"><circle cx="11" cy="13" r="10" fill="#f79a25" /><path d="M10 20q-1.500-4 2.500-4 1.500-3.500 5-2.500 2.500.8 2.500 3.500 3 .5 2.500 3-.5 1.500-2.500 1.500h-8q-1.500 0-2-1.500z" fill="#b8d7f4" /><circle cx="17" cy="6.500" r="6.300" fill="#cd2a2a" /><text x="17" y="9.700" fontSize="9" fontFamily="Open Sans, sans-serif" textAnchor="middle" fill="#fff">1</text></Svg>
);

const Cell = ({ w, line, extra, active, children }) => (
  <div className={"flex h-10 shrink-0 flex-col items-center " + w + (active ? " bg-[#4b4b4b]" : "")}>
    <div className="flex min-h-0 flex-1 items-center justify-center">{children}</div>
    <div className={"flex h-[2px] " + (active ? "w-full bg-[#9be8c6]" : line ? "w-[31px] bg-[#9be8c6]" : "w-0")}>{extra && <span className="ml-auto h-full w-[6px] bg-[#6ea58d]" />}</div>
  </div>
);

function Taskbar() {
  return (
    <footer className="flex h-10 shrink-0 items-center bg-[#202020] font-['Noto_Sans',sans-serif] text-[12px] text-white">
      <div className="flex w-12 shrink-0 justify-center"><Svg><path d="M0 2.300l7-1V7.600H0zM7.800 1.200L16 0v7.600H7.800zM0 8.400h7v6.300l-7-1zM7.800 8.400H16V16l-8.200-1.200z" fill="#fff" /></Svg></div>
      <div className="flex h-10 w-[288px] shrink-0 items-center border border-[#5a5a5a] bg-[#303030] pl-[11px] text-[14px] text-[#d6d6d6]">
        <Svg s={17} vb="0 0 17 17"><circle cx="10.500" cy="6.300" r="5.300" stroke="#e6e6e6" strokeWidth="1.300" /><path d="M6.700 10.200L.7 16.300" stroke="#e6e6e6" strokeWidth="1.300" /></Svg>
        <span className="ml-[11px] whitespace-nowrap">Type here to search</span>
        <span className="ml-auto mr-[3px]"><Island /></span>
      </div>
      <Cell w="w-[48px]"><Svg w={17} h={16} vb="0 0 17 16"><path d="M.7 0v3h9.600V0M.7 5.500h9.600v5H.7zM.7 16v-3h9.600v3M15 0v3M15 9v7" stroke="#eee" strokeWidth="1.200" /><path d="M13.500 4h3v3h-3z" fill="#fff" /></Svg></Cell>
      <Cell w="w-[43px]"><Copilot /></Cell>
      <Cell w="w-[39px]" line><Edge /></Cell>
      <Cell w="w-[40px]"><Store /></Cell>
      <Cell w="w-[40px]"><Mail /></Cell>
      <Cell w="w-[39px]" line extra active><ChromeBio /></Cell>
      <Cell w="w-[41px]"><SendMail /></Cell>
      <Cell w="w-[38px]" line extra><Folder /></Cell>
      <Cell w="w-[40px]"><Brave /></Cell>
      <Cell w="w-[38px]"><Am /></Cell>
      <Cell w="w-[41px]" line><ChromeIg /></Cell>
      <Cell w="w-[37px]" line extra><Rar /></Cell>
      <Cell w="w-[40px]" line extra><BlueApp /></Cell>
      <Cell w="w-[39px]" line><span className="flex items-end pl-[5px]"><FaWhatsapp className="block h-[26px] w-[26px] text-[#25d366]" /><span className="-mb-[3px] -ml-[10px] flex h-4 w-4 items-center justify-center rounded-full border border-[#9b9b9b] bg-[#333] text-[11px]">1</span></span></Cell>
      <Cell w="w-[36px]" line extra><Term /></Cell>
      <div className="ml-[5px] flex h-10 w-[17px] shrink-0 flex-col items-center justify-between bg-[#f0f0f0] py-[7px]">
        <Svg w={8} h={5} vb="0 0 8 5"><path d="M.5 4.500L4 1l3.500 3.500" stroke="#505050" strokeWidth="1.500" /></Svg>
        <Svg w={8} h={5} vb="0 0 8 5"><path d="M.5.5L4 4 7.500.5" stroke="#505050" strokeWidth="1.500" /></Svg>
      </div>
      <span className="ml-[24px]"><Weather /></span>
      <span className="ml-[5px] w-[55px] whitespace-nowrap text-[13px] tracking-[-0.2px]">30°C</span>
      <Svg w={12} h={7} vb="0 0 12 7"><path d="M.6 6.400L6 1l5.400 5.400" stroke="#fff" strokeWidth="1.200" /></Svg>
      <Svg s={16} className="ml-[11px]"><path d="M3 4h7v8H3zM10 7l2.500-2v6L10 9M4 2Q6.500-.3 9 2M4 14q2.500 2.300 5 0" stroke="#fff" strokeWidth="1.100" /><circle cx="6.500" cy="8" r="1.300" stroke="#fff" strokeWidth=".7" /></Svg>
      <Svg w={15} h={16} vb="0 0 15 16" className="ml-[8px]"><path d="M.5 4h12.500v8H.5zM14.500 6.500v3" stroke="#fff" /><path d="M2 5.500h5.500v5H2z" fill="#fff" /></Svg>
      <Svg s={16} className="ml-[8px]"><path d="M5 3.500h10.500v8H3.500V6M7 14.500h6M9.500 11.500v3M.5 1.500h4V5h-4zM2.500 5v9.500" stroke="#fff" /></Svg>
      <Svg w={17} h={16} vb="0 0 17 16" className="ml-[8px]"><path d="M.6 5.700h2.600L6.500 2.500v11L3.200 10.300H.6zM9 6q1.300 2 0 4M11.300 4q2.500 4 0 8M13.600 2.200q3.600 5.800 0 11.600" stroke="#fff" strokeWidth="1.100" /></Svg>
      <Svg s={17} vb="0 0 17 17" className="ml-[11px]"><path d="M5 11L11.500 1.500q1.500-1.500 2.500.2L8 12.500 4.500 14zM6 8Q1 9 1.200 12.800 2 17 7 14.500q4-3 3.700-6 .5-2.500 2.300-1 .5 2 3 0" stroke="#fff" strokeWidth="1.100" /></Svg>
      <span className="ml-[13px] w-[24px] whitespace-nowrap tracking-[-0.4px]">ENG</span>
      <div className="ml-[6px] flex w-[66px] flex-col items-center whitespace-nowrap text-[12px] leading-[18px] tracking-[-0.55px]"><span>9:26 AM</span><span>11/14/2024</span></div>
      <Svg w={16} h={17} vb="0 0 16 17" className="ml-[11px]"><path d="M.6 1h14.800v11.500H11L8.300 15.500 5.700 12.500H.6z" stroke="#fff" strokeWidth="1.200" /></Svg>
      <span className="ml-auto mr-[4px] h-10 w-px bg-[#5a5a5a]" />
    </footer>
  );
}

export default function App() {
  return (
    <div className="flex h-[768px] w-[1366px] flex-col overflow-hidden bg-white">
      <TabStrip />
      <Toolbar />
      <SiteHeader />
      <div className="flex min-h-0 flex-1">
        <Sidebar />
        <Main />
        <div className="flex w-[11px] shrink-0 flex-col items-center bg-[#f8f9fb] py-[5px]">
          <Tri up />
          <div className="mt-[232px] h-[51px] w-[7px] bg-[#6a737b]" />
          <span className="mt-auto"><Tri /></span>
        </div>
      </div>
      <Taskbar />
    </div>
  );
}
